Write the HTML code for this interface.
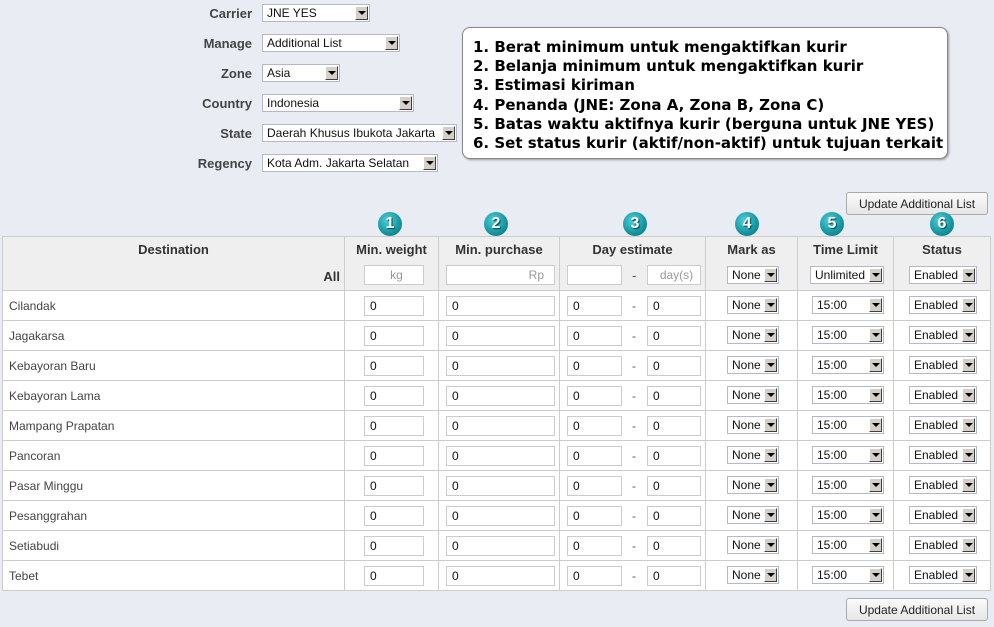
<!DOCTYPE html>
<html><head><meta charset="utf-8"><style>
body{margin:0;width:994px;height:627px;background:#e9ecf3;font-family:"Liberation Sans",Arial,sans-serif;font-size:12px;color:#222;position:relative;overflow:hidden}
.a{position:absolute}
.lbl{position:absolute;right:742px;font-weight:bold;font-size:13px;color:#444;text-align:right}
.sel{position:absolute;background:#fff;border:1px solid #b5b8c8;height:16px;box-sizing:content-box;font-size:12px;line-height:16px;padding-left:4px;white-space:nowrap;overflow:hidden;color:#111}
.sel i{position:absolute;right:1px;top:1px;width:13px;height:14px;background:#d4d0c8;border-top:1px solid #fff;border-left:1px solid #fff;border-right:1px solid #404040;border-bottom:1px solid #404040;box-sizing:border-box}
.sel i:after{content:"";position:absolute;left:2px;top:4px;border-left:4px solid transparent;border-right:4px solid transparent;border-top:4px solid #000}
.info{position:absolute;left:462px;top:27px;width:486px;height:132px;background:#fff;border:1px solid #888;border-radius:8px;box-shadow:1px 1px 2px #999;font-family:"DejaVu Sans",Verdana,sans-serif;font-weight:bold;font-size:15px;line-height:19.2px;padding:10px 0 0 10px;box-sizing:border-box;color:#000;white-space:nowrap}
.btn{position:absolute;left:846px;width:142px;height:23px;background:linear-gradient(#fbfbfb,#e6e6e6);border:1px solid #aaa;border-radius:3px;font-size:12px;text-align:center;line-height:22px;box-sizing:border-box;color:#222}
.num{position:absolute;top:212px;width:24px;height:24px;border-radius:50%;background:radial-gradient(circle at 40% 35%,#4fd0dc,#13949f 60%,#0b6f78);color:#fff;font-weight:bold;font-size:16px;text-align:center;line-height:24px;text-shadow:1px 1px 1px #044}
table{position:absolute;left:2px;top:236px;border-collapse:collapse;table-layout:fixed;width:988px}
td,th{border:1px solid #ccc;height:29px;padding:0;position:relative;background:#fff}
th{background:#efefef;height:53px;vertical-align:top;font-size:13px;color:#333}
th b{display:block;margin-top:5px}
.in{position:absolute;top:5px;height:20px;border:1px solid #ccc;box-sizing:border-box;background:#fff;font-size:12px;line-height:18px;padding-left:5px;color:#111}
th .in{top:28px;color:#999;font-weight:normal}
td .sel{top:5px}
th .sel{font-weight:normal;text-align:left}
.d{position:absolute;left:72px;top:8px;color:#555;font-weight:normal}
th .d{top:31px}
.dest{padding-left:6px;color:#444;font-size:12px}
</style></head><body>
<div class="lbl" style="top:6px">Carrier</div><div class="sel" style="left:262px;top:4px;width:102px">JNE YES<i></i></div>
<div class="lbl" style="top:36px">Manage</div><div class="sel" style="left:262px;top:34px;width:132px">Additional List<i></i></div>
<div class="lbl" style="top:66px">Zone</div><div class="sel" style="left:262px;top:64px;width:72px">Asia<i></i></div>
<div class="lbl" style="top:96px">Country</div><div class="sel" style="left:262px;top:94px;width:146px">Indonesia<i></i></div>
<div class="lbl" style="top:126px">State</div><div class="sel" style="left:262px;top:124px;width:189px">Daerah Khusus Ibukota Jakarta<i></i></div>
<div class="lbl" style="top:156px">Regency</div><div class="sel" style="left:262px;top:154px;width:170px">Kota Adm. Jakarta Selatan<i></i></div>
<div class="info">1. Berat minimum untuk mengaktifkan kurir<br>2. Belanja minimum untuk mengaktifkan kurir<br>3. Estimasi kiriman<br>4. Penanda (JNE: Zona A, Zona B, Zona C)<br>5. Batas waktu aktifnya kurir (berguna untuk JNE YES)<br>6. Set status kurir (aktif/non-aktif) untuk tujuan terkait</div>
<div class="btn" style="top:192px">Update Additional List</div>
<div class="num" style="left:378px">1</div><div class="num" style="left:484px">2</div><div class="num" style="left:623px">3</div><div class="num" style="left:735px">4</div><div class="num" style="left:820px">5</div><div class="num" style="left:930px">6</div>
<table>
<colgroup><col style="width:342px"><col style="width:94px"><col style="width:121px"><col style="width:146px"><col style="width:92px"><col style="width:96px"><col style="width:97px"></colgroup>
<tr><th><b>Destination</b><span class="a" style="right:4px;top:32px">All</span></th>
<th><b>Min. weight</b><div class="in" style="left:19px;width:60px">kg</div></th>
<th><b>Min. purchase</b><div class="in" style="left:7px;width:109px;text-align:right;padding-right:10px">Rp</div></th>
<th><b>Day estimate</b><div class="in" style="left:7px;width:55px"></div><span class="d">-</span><div class="in" style="left:87px;width:54px">day(s)</div></th>
<th><b>Mark as</b><div class="sel" style="left:21px;width:46px;top:29px">None<i></i></div></th>
<th><b>Time Limit</b><div class="sel" style="left:12px;width:68px;top:29px">Unlimited<i></i></div></th>
<th><b>Status</b><div class="sel" style="left:15px;width:62px;top:29px">Enabled<i></i></div></th></tr>
<tr><td class="dest">Cilandak</td><td><div class="in" style="left:19px;width:60px">0</div></td><td><div class="in" style="left:7px;width:109px">0</div></td><td><div class="in" style="left:7px;width:55px">0</div><span class="d">-</span><div class="in" style="left:87px;width:54px">0</div></td><td><div class="sel" style="left:21px;width:46px">None<i></i></div></td><td><div class="sel" style="left:14px;width:66px">15:00<i></i></div></td><td><div class="sel" style="left:15px;width:62px">Enabled<i></i></div></td></tr>
<tr><td class="dest">Jagakarsa</td><td><div class="in" style="left:19px;width:60px">0</div></td><td><div class="in" style="left:7px;width:109px">0</div></td><td><div class="in" style="left:7px;width:55px">0</div><span class="d">-</span><div class="in" style="left:87px;width:54px">0</div></td><td><div class="sel" style="left:21px;width:46px">None<i></i></div></td><td><div class="sel" style="left:14px;width:66px">15:00<i></i></div></td><td><div class="sel" style="left:15px;width:62px">Enabled<i></i></div></td></tr>
<tr><td class="dest">Kebayoran Baru</td><td><div class="in" style="left:19px;width:60px">0</div></td><td><div class="in" style="left:7px;width:109px">0</div></td><td><div class="in" style="left:7px;width:55px">0</div><span class="d">-</span><div class="in" style="left:87px;width:54px">0</div></td><td><div class="sel" style="left:21px;width:46px">None<i></i></div></td><td><div class="sel" style="left:14px;width:66px">15:00<i></i></div></td><td><div class="sel" style="left:15px;width:62px">Enabled<i></i></div></td></tr>
<tr><td class="dest">Kebayoran Lama</td><td><div class="in" style="left:19px;width:60px">0</div></td><td><div class="in" style="left:7px;width:109px">0</div></td><td><div class="in" style="left:7px;width:55px">0</div><span class="d">-</span><div class="in" style="left:87px;width:54px">0</div></td><td><div class="sel" style="left:21px;width:46px">None<i></i></div></td><td><div class="sel" style="left:14px;width:66px">15:00<i></i></div></td><td><div class="sel" style="left:15px;width:62px">Enabled<i></i></div></td></tr>
<tr><td class="dest">Mampang Prapatan</td><td><div class="in" style="left:19px;width:60px">0</div></td><td><div class="in" style="left:7px;width:109px">0</div></td><td><div class="in" style="left:7px;width:55px">0</div><span class="d">-</span><div class="in" style="left:87px;width:54px">0</div></td><td><div class="sel" style="left:21px;width:46px">None<i></i></div></td><td><div class="sel" style="left:14px;width:66px">15:00<i></i></div></td><td><div class="sel" style="left:15px;width:62px">Enabled<i></i></div></td></tr>
<tr><td class="dest">Pancoran</td><td><div class="in" style="left:19px;width:60px">0</div></td><td><div class="in" style="left:7px;width:109px">0</div></td><td><div class="in" style="left:7px;width:55px">0</div><span class="d">-</span><div class="in" style="left:87px;width:54px">0</div></td><td><div class="sel" style="left:21px;width:46px">None<i></i></div></td><td><div class="sel" style="left:14px;width:66px">15:00<i></i></div></td><td><div class="sel" style="left:15px;width:62px">Enabled<i></i></div></td></tr>
<tr><td class="dest">Pasar Minggu</td><td><div class="in" style="left:19px;width:60px">0</div></td><td><div class="in" style="left:7px;width:109px">0</div></td><td><div class="in" style="left:7px;width:55px">0</div><span class="d">-</span><div class="in" style="left:87px;width:54px">0</div></td><td><div class="sel" style="left:21px;width:46px">None<i></i></div></td><td><div class="sel" style="left:14px;width:66px">15:00<i></i></div></td><td><div class="sel" style="left:15px;width:62px">Enabled<i></i></div></td></tr>
<tr><td class="dest">Pesanggrahan</td><td><div class="in" style="left:19px;width:60px">0</div></td><td><div class="in" style="left:7px;width:109px">0</div></td><td><div class="in" style="left:7px;width:55px">0</div><span class="d">-</span><div class="in" style="left:87px;width:54px">0</div></td><td><div class="sel" style="left:21px;width:46px">None<i></i></div></td><td><div class="sel" style="left:14px;width:66px">15:00<i></i></div></td><td><div class="sel" style="left:15px;width:62px">Enabled<i></i></div></td></tr>
<tr><td class="dest">Setiabudi</td><td><div class="in" style="left:19px;width:60px">0</div></td><td><div class="in" style="left:7px;width:109px">0</div></td><td><div class="in" style="left:7px;width:55px">0</div><span class="d">-</span><div class="in" style="left:87px;width:54px">0</div></td><td><div class="sel" style="left:21px;width:46px">None<i></i></div></td><td><div class="sel" style="left:14px;width:66px">15:00<i></i></div></td><td><div class="sel" style="left:15px;width:62px">Enabled<i></i></div></td></tr>
<tr><td class="dest">Tebet</td><td><div class="in" style="left:19px;width:60px">0</div></td><td><div class="in" style="left:7px;width:109px">0</div></td><td><div class="in" style="left:7px;width:55px">0</div><span class="d">-</span><div class="in" style="left:87px;width:54px">0</div></td><td><div class="sel" style="left:21px;width:46px">None<i></i></div></td><td><div class="sel" style="left:14px;width:66px">15:00<i></i></div></td><td><div class="sel" style="left:15px;width:62px">Enabled<i></i></div></td></tr>
</table>
<div class="btn" style="top:598px">Update Additional List</div>
</body></html>
